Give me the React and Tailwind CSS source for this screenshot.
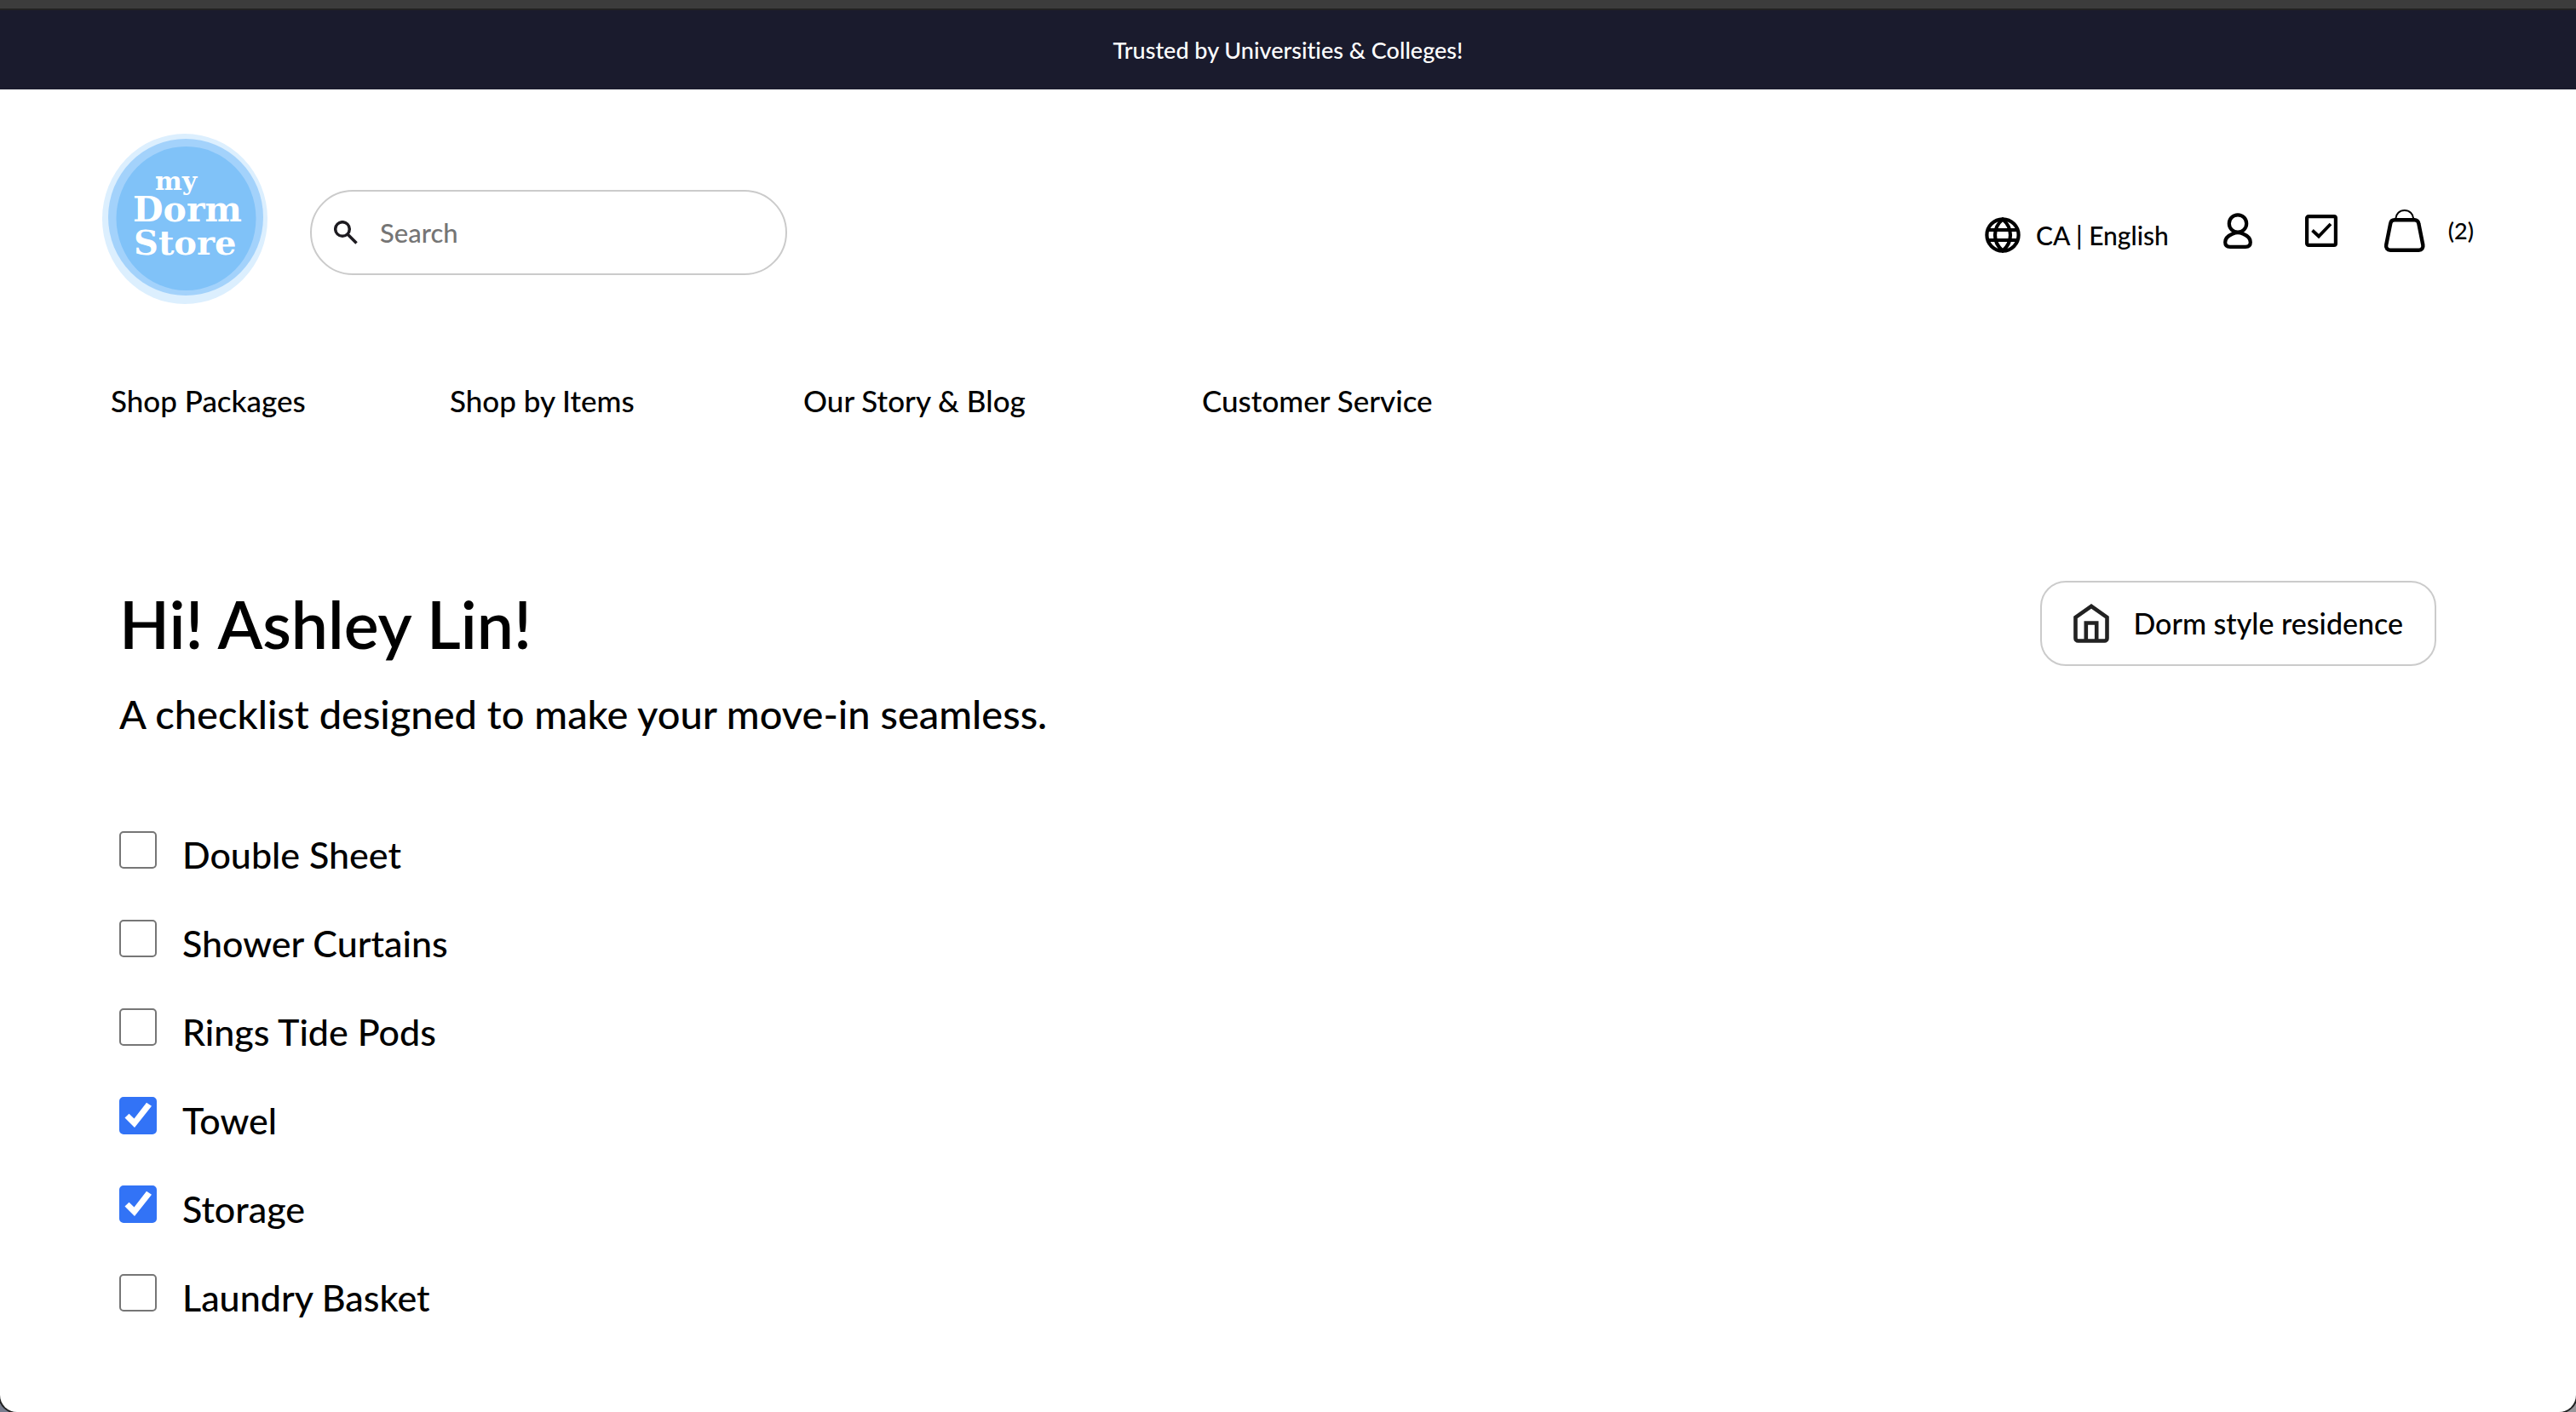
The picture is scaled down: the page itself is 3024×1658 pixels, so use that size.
import React, { useState } from 'react';

const NAV_LINKS = ['Shop Packages', 'Shop by Items', 'Our Story & Blog', 'Customer Service'];

const CHECKLIST = [
  { label: 'Double Sheet', done: false },
  { label: 'Shower Curtains', done: false },
  { label: 'Rings Tide Pods', done: false },
  { label: 'Towel', done: true },
  { label: 'Storage', done: true },
  { label: 'Laundry Basket', done: false },
];

function Logo() {
  return (
    <svg viewBox="0 0 194 200" className="h-[200px] w-[194px]" role="img" aria-label="my Dorm Store">
      <ellipse cx="97" cy="100" rx="97" ry="100" fill="#dceffe" />
      <ellipse cx="98" cy="98" rx="91" ry="92" fill="#a3d2fb" />
      <ellipse cx="98.500" cy="99.500" rx="82" ry="84.500" fill="#80c2f8" />
      <g fill="#fff" fontFamily="'DejaVu Serif', serif" fontWeight="700">
        <text x="62" y="66" fontSize="30">my</text>
        <text x="36" y="103" fontSize="41">Dorm</text>
        <text x="37" y="142" fontSize="40">Store</text>
      </g>
    </svg>
  );
}

function SearchIcon() {
  return (
    <svg viewBox="0 0 28 28" className="size-7 shrink-0" fill="none" stroke="#1d1b20" strokeWidth="3.500" aria-hidden="true">
      <circle cx="10" cy="10" r="8.300" />
      <path d="M16 16l10.500 10.500" />
    </svg>
  );
}

function GlobeIcon() {
  return (
    <svg viewBox="0 0 42 42" className="size-[42px]" fill="none" stroke="#000" strokeWidth="4.200" aria-hidden="true">
      <circle cx="21" cy="21" r="18.600" />
      <path d="M21 2.500c-6 5-9 11-9 18.500s3 13.500 9 18.500c6-5 9-11 9-18.500S27 7.500 21 2.500zM4 15h34M4 27h34" />
    </svg>
  );
}

function UserIcon() {
  return (
    <svg viewBox="0 0 34 42" className="h-[42px] w-[34px]" fill="none" stroke="#000" strokeWidth="4.200" aria-hidden="true">
      <circle cx="17" cy="12.500" r="10.200" />
      <path d="M11 24.500C6 26.500 2.200 30 2.200 34.500 2.200 38 4.500 39.800 8 39.800h18c3.500 0 5.800-1.800 5.800-5.300 0-4.500-3.800-8-8.800-10-4-1.800-8-1.800-12 0z" />
    </svg>
  );
}

function TaskIcon() {
  return (
    <svg viewBox="0 0 38 38" className="size-[38px]" fill="none" stroke="#000" strokeWidth="4.200" aria-hidden="true">
      <rect x="2.100" y="2.100" width="33.800" height="33.800" rx="2" />
      <path d="M8.500 18.500l7.500 7 14-14.500" strokeWidth="3.800" />
    </svg>
  );
}

function BagIcon() {
  return (
    <svg viewBox="0 0 50 50" className="size-[50px]" fill="none" stroke="#000" aria-hidden="true">
      <path d="M14.500 11C14.500 5 19 1 24.700 1S35 5 35 11" strokeWidth="2" />
      <path d="M13 12.300h23.500c2.500 0 4.500 1.700 4.800 4.200l5 25c.7 3.500-1.300 6.200-4.800 6.200H8c-3.500 0-5.500-2.700-4.800-6.200l5-25c.4-2.500 2.300-4.200 4.800-4.200z" strokeWidth="4.400" />
    </svg>
  );
}

function HomeIcon() {
  return (
    <svg viewBox="0 0 42 46" className="h-[46px] w-[42px] shrink-0" fill="none" stroke="#222" strokeWidth="4.600" aria-hidden="true">
      <path d="M21 2.800L2.500 16v24.500A3 3 0 0 0 5.500 43.500h31a3 3 0 0 0 3-3V16z" />
      <path d="M14.800 43V22.500h12.400V43" />
    </svg>
  );
}

function CheckItem({ label, done }) {
  const [checked, setChecked] = useState(done);
  return (
    <li>
      <label className="flex h-16 w-fit items-center gap-[30px]">
        <span className="mb-3 grid size-11">
          <input
            type="checkbox"
            checked={checked}
            onChange={() => setChecked(!checked)}
            className="peer col-start-1 row-start-1 size-11 appearance-none rounded-[5px] border-2 border-[#767676] bg-white checked:border-[#3273f6] checked:bg-[#3273f6]"
          />
          <svg viewBox="0 0 44 44" className="pointer-events-none col-start-1 row-start-1 hidden size-11 peer-checked:block" aria-hidden="true">
            <path d="M6.500 24.500L11.500 19.700l6 5.800L32 6.700l6 4L18 36z" fill="#fff" />
          </svg>
        </span>
        <span className="text-[43px] leading-[64px] font-medium">{label}</span>
      </label>
    </li>
  );
}

export default function App() {
  return (
    <div className="flex min-h-screen flex-col bg-linear-to-r from-[#787d8e] to-[#98979b] font-[Lato,sans-serif] text-black [font-variant-ligatures:none]">
      <div className="h-3 border-b-2 border-[#4a4a4a] bg-[#3c3c3c]" />
      <div className="grow rounded-b-[20px] bg-white shadow-[0_0_0_2px_#222222]">
        <p className="bg-[#1a1b2d] text-center text-[27px] leading-[93px] font-medium text-white">
          Trusted by Universities &amp; Colleges!
        </p>

        <header>
          <div className="flex items-center pt-[52px] pr-[120px] pl-[120px]">
            <a href="#home"><Logo /></a>
            <label className="mt-8 ml-[50px] flex h-[100px] w-[560px] items-center gap-[26px] rounded-[50px] border-2 border-[#cbcbcb] px-[26px]">
              <SearchIcon />
              <input
                type="text"
                placeholder="Search"
                aria-label="Search"
                className="w-full min-w-0 text-[31px] font-medium outline-none placeholder:text-[#757575]"
              />
            </label>
            <div className="mt-7 ml-auto flex items-center">
              <button type="button" className="mt-[10px] flex items-center gap-[18px] text-[30px] leading-10 font-medium">
                <GlobeIcon />
                CA | English
              </button>
              <button type="button" aria-label="Account" className="ml-16"><UserIcon /></button>
              <button type="button" aria-label="Checklist" className="ml-[62px]"><TaskIcon /></button>
              <button type="button" className="ml-[54px] flex items-center gap-[26px] text-[27px] leading-10 font-medium">
                <BagIcon />
                (2)
              </button>
            </div>
          </div>
          <nav className="mt-[89px] grid grid-cols-[398fr_415fr_468fr_1613fr] pl-[130px] text-[35px] leading-[48px] font-medium">
            {NAV_LINKS.map((name) => (
              <a key={name} href="#shop" className="w-fit">{name}</a>
            ))}
          </nav>
        </header>

        <main className="mt-[188px] pr-[164px] pb-16 pl-[140px]">
          <div className="flex items-center justify-between">
            <h1 className="text-[77px] leading-[96px] font-semibold">Hi! Ashley Lin!</h1>
            <button type="button" className="flex h-[100px] items-center gap-7 rounded-[30px] border-2 border-[#cbcbcb] px-[37px] text-[34px] leading-10 font-medium">
              <HomeIcon />
              Dorm style residence
            </button>
          </div>
          <p className="mt-6 text-[47px] leading-[64px] font-medium">A checklist designed to make your move-in seamless.</p>
          <ul className="mt-[102px] flex flex-col gap-10">
            {CHECKLIST.map((item) => (
              <CheckItem key={item.label} label={item.label} done={item.done} />
            ))}
          </ul>
        </main>
      </div>
    </div>
  );
}
